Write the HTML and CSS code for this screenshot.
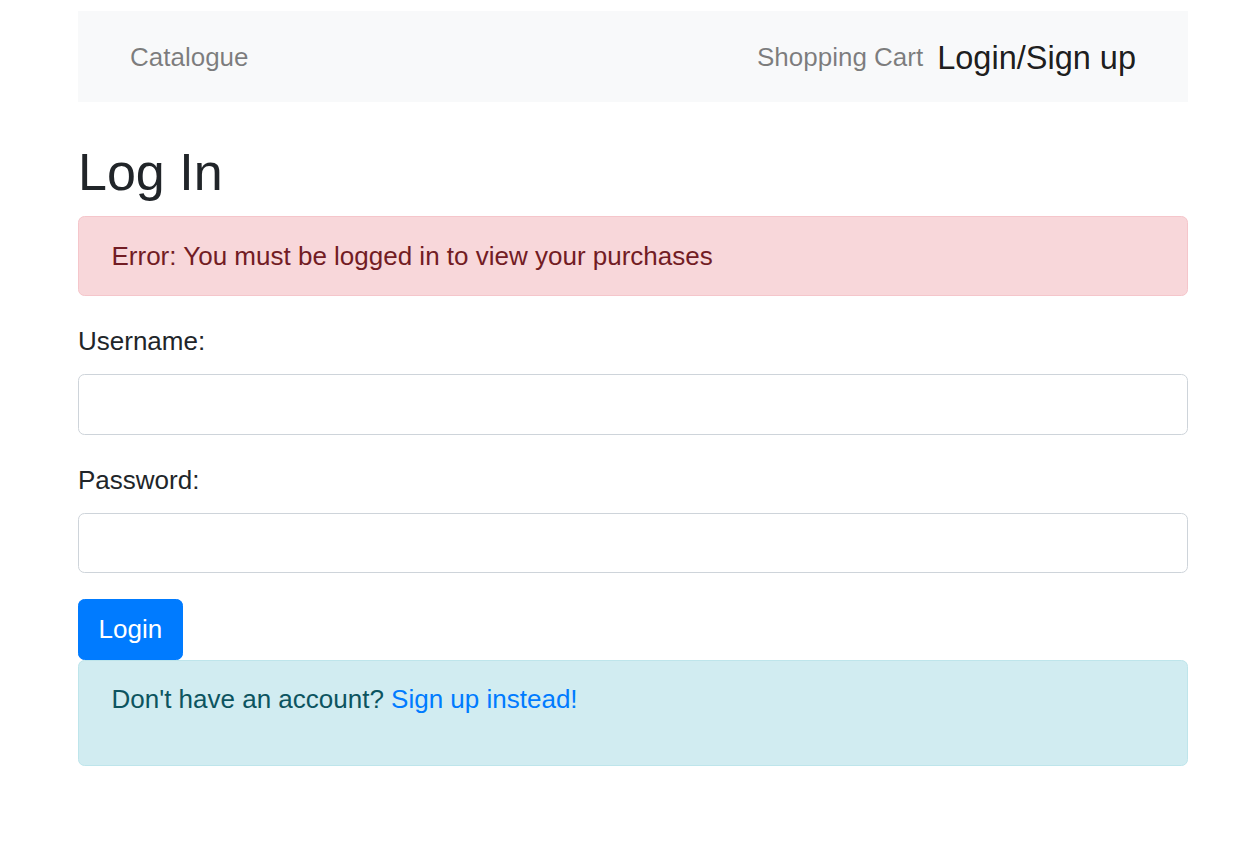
FILE: index.html
```html
<!DOCTYPE html>
<html lang="en">
<head>
<meta charset="utf-8">
<title>Log In</title>
<link rel="stylesheet" href="styles.css">
</head>
<body>
<div class="container">
  <nav class="navbar">
    <a class="nav-link" href="#">Catalogue</a>
    <div class="nav-right">
      <a class="nav-link" href="#">Shopping Cart</a>
      <a class="brand" href="#">Login/Sign up</a>
    </div>
  </nav>
  <h2 class="title">Log In</h2>
  <div class="alert alert-danger">Error: You must be logged in to view your purchases</div>
  <form class="login-form">
    <div class="form-group">
      <label class="label" for="username">Username:</label>
      <input class="form-control" id="username" type="text">
    </div>
    <div class="form-group">
      <label class="label" for="password">Password:</label>
      <input class="form-control" id="password" type="password">
    </div>
    <button class="btn" type="button">Login</button>
  </form>
  <div class="alert alert-info">
    <p class="alert-text">Don't have an account? <a class="link" href="#">Sign up instead!</a></p>
  </div>
</div>
</body>
</html>
```

FILE: styles.css
```css
* { box-sizing: border-box; }
html, body { margin: 0; padding: 0; }
body {
  font-family: "Liberation Sans", Arial, sans-serif;
  font-size: 26px;
  line-height: 1.5;
  color: #212529;
  background: #fff;
}
.container {
  width: 1110px;
  margin-left: 78px;
  padding-top: 11px;
}
.navbar {
  display: flex;
  align-items: center;
  justify-content: space-between;
  height: 91px;
  padding: 2px 52px 0 39px;
  background: #f8f9fa;
}
.nav-right { display: flex; align-items: center; }
.nav-link {
  padding: 13px;
  color: rgba(0, 0, 0, 0.5);
  text-decoration: none;
  font-size: 26px;
  line-height: 39px;
}
.nav-right .nav-link { padding-right: 14px; }
.brand {
  color: rgba(0, 0, 0, 0.9);
  text-decoration: none;
  font-size: 32.5px;
  line-height: 48px;
}
.title {
  font-size: 52px;
  font-weight: 500;
  line-height: 1.2;
  margin: 39px 0 13px;
}
.alert {
  border: 1px solid transparent;
  border-radius: 6.5px;
  padding: 19.5px 32.5px;
}
.alert-danger {
  background: #f8d7da;
  border-color: #f5c6cb;
  color: #721c24;
  margin-bottom: 26px;
}
.alert-info {
  background: #d1ecf1;
  border-color: #bee5eb;
  color: #0c5460;
}
.alert-text { margin: 0 0 26px; }
.link { color: #007bff; text-decoration: none; }
.login-form { margin: 0; }
.form-group { margin-bottom: 26px; }
.label { display: block; margin-bottom: 13px; }
.form-control {
  display: block;
  width: 100%;
  height: 60.5px;
  padding: 9.75px 19.5px;
  font: inherit;
  border: 1px solid #ced4da;
  border-radius: 6.5px;
  background: #fff;
}
.btn {
  display: block;
  font: inherit;
  color: #fff;
  background: #007bff;
  border: 1px solid #007bff;
  border-radius: 6.5px;
  padding: 9.75px 19.5px;
  line-height: 1.5;
}
```
